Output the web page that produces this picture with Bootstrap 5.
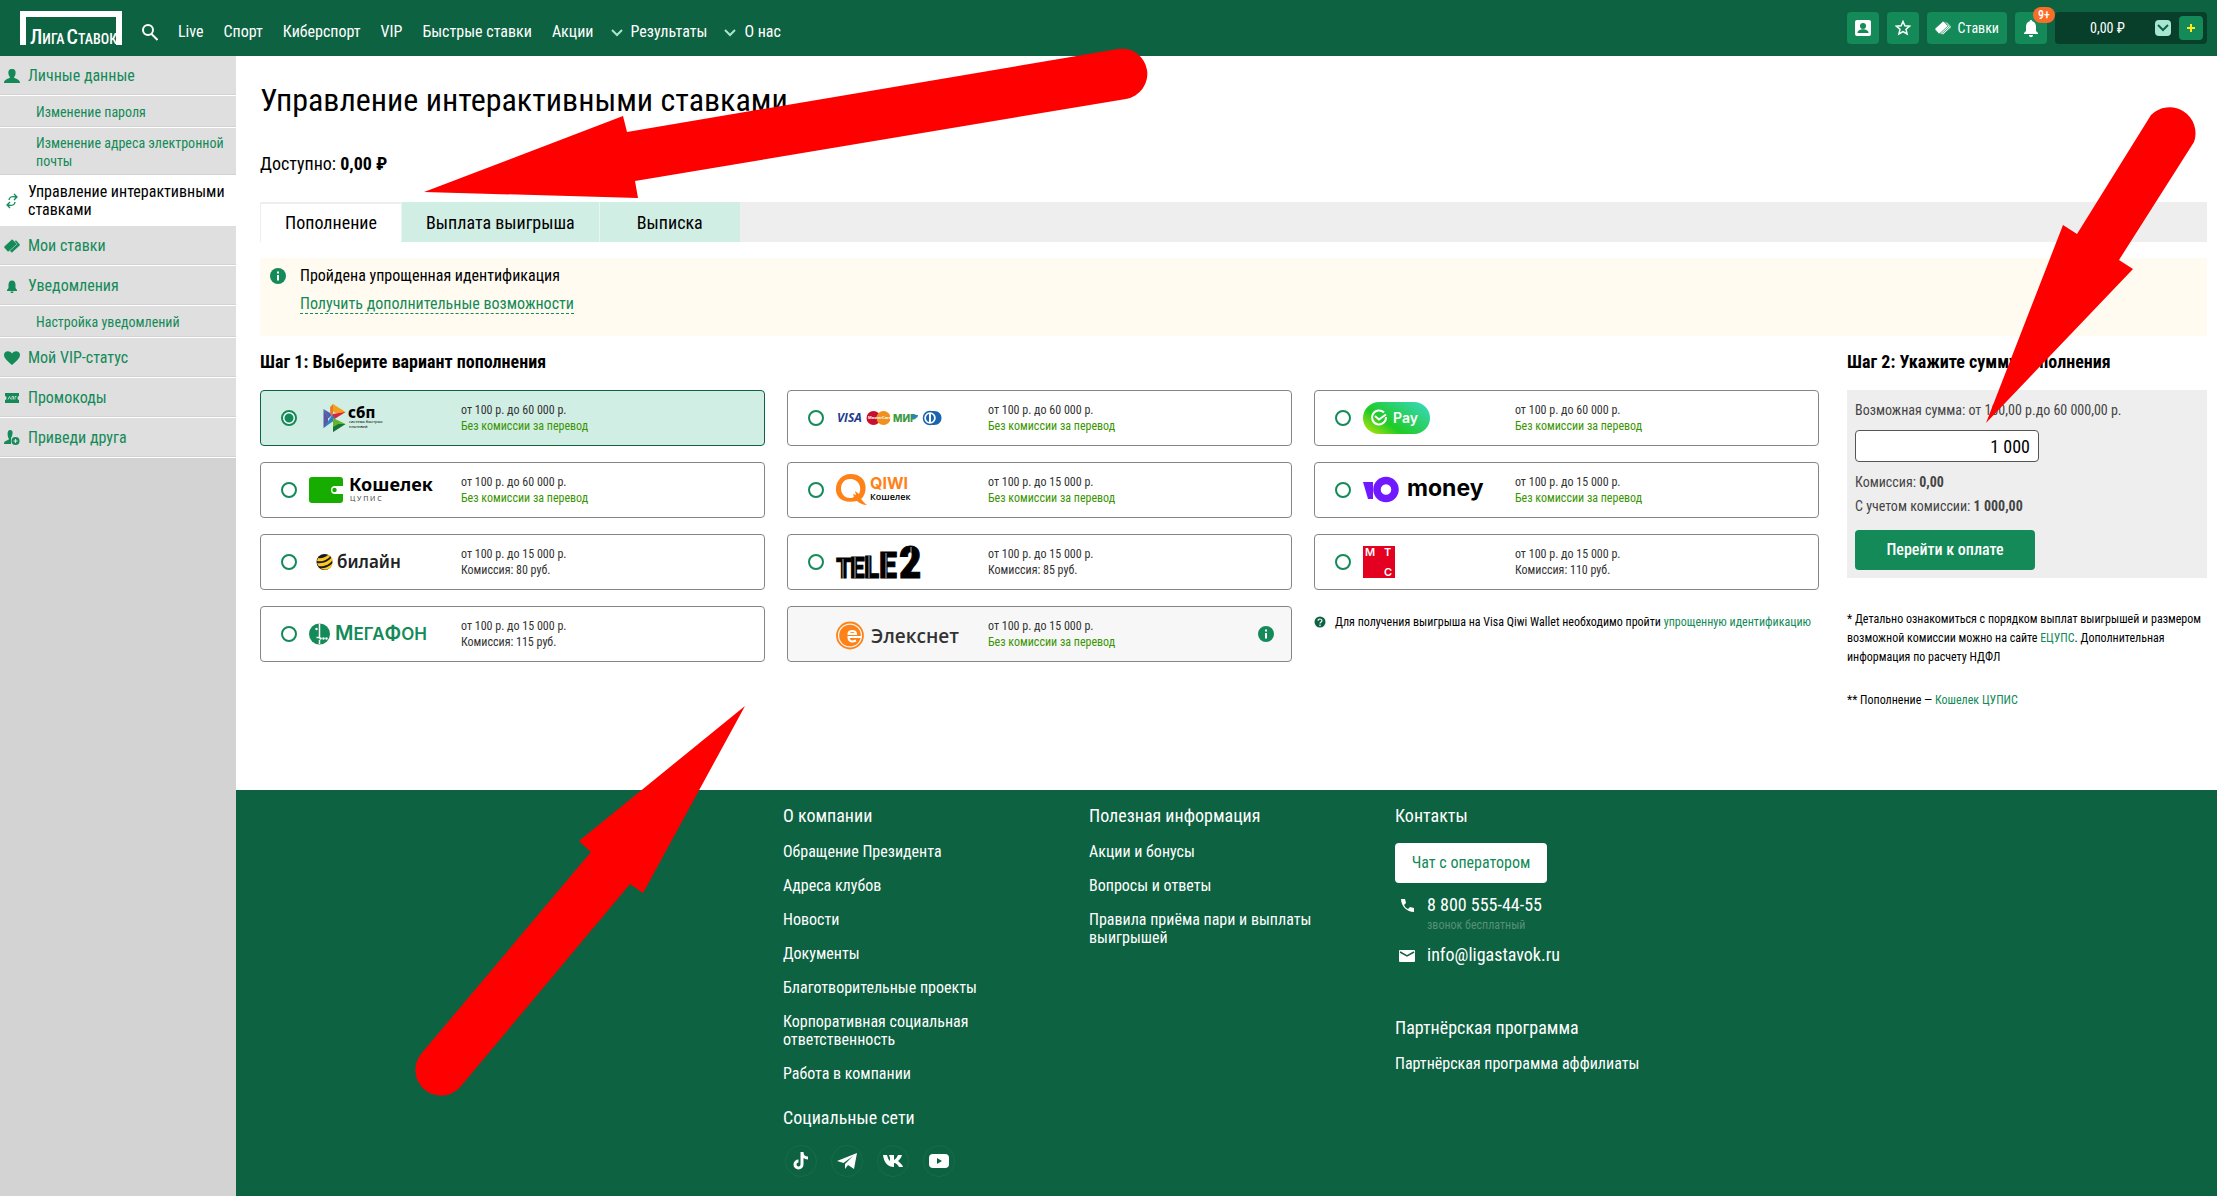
<!DOCTYPE html>
<html lang="ru">
<head>
<meta charset="utf-8">
<meta name="viewport" content="width=device-width, initial-scale=1">
<title>Управление интерактивными ставками</title>
<link href="https://cdn.jsdelivr.net/npm/bootstrap@5.3.0/dist/css/bootstrap.min.css" rel="stylesheet">
<style>
:root{--forest:#0d6241;--leaf:#138a58;--mint:#d1eee5}
body{font-family:"Roboto Condensed",Roboto,"Liberation Sans",sans-serif;font-size:16px;line-height:18px;color:#000;background:#fff;min-height:100vh}
a{color:var(--leaf);text-decoration:none}
.topbar{background:var(--forest);height:56px;padding:0 10px 0 20px}
.topbar .menu{gap:20px;margin-left:20px;padding-top:8px}
.topbar .menu a,.topbar .menu button{color:#fff;border:0;background:none;padding:0}
.topbar .menu button{margin-left:-3px}
.tools{gap:8px}
.tool{height:32px;min-width:32px;background:var(--leaf);border:0;border-radius:4px;color:#fff;padding:0 8px;font-size:14px;display:flex;align-items:center;justify-content:center;gap:6px;position:relative}
.tool.square{padding:0}
.count{position:absolute;left:18px;top:-5px;background:#f96d29;border-radius:8px;font-size:12px;line-height:16px;width:22px;font-weight:500}
.balance{width:152px;height:32px;background:#083f2a;border-radius:4px;color:#fff;font-size:14px;padding:0 4px 0 35px}
.balance button{border:0;padding:0;border-radius:4px;display:flex;align-items:center;justify-content:center}
.balance .open{width:16px;height:16px;background:#a6e6d2}
.balance .plus{width:24px;height:24px;background:var(--leaf)}
.side{width:236px;background:#d3d3d3}
.side a{display:flex;align-items:center;background:#dfdfdf;border-bottom:1px solid #fff;box-shadow:inset 0 -1px #d2d2d2;padding:11px 10px 10px 28px;position:relative;line-height:18px}
.side a.sub{font-size:14px;padding:7px 10px 6px 36px}
.side a.sub.two{padding:6px 10px 5px 36px}
.side a.active{background:#fff;color:#000;padding:7px 10px 6px 28px;box-shadow:none}
.side svg{position:absolute;left:4px;width:16px;height:16px}
.pane{padding:24px 10px 0 24px}
.pane h1{font-size:32px;line-height:40px;font-weight:400;margin:0 0 32px}
.avail{font-size:18px;line-height:24px;margin-bottom:26px}
.switch{background:#eee;height:40px}
.switch button{border:0;background:var(--mint);font-size:18px;padding:2px 24px 0;color:#000;min-width:141px}
.switch button+button{border-left:1px solid #e6f7f2}
.switch button.active{background:#fff;border:solid #eee;border-width:2px 0 0 1px;padding-top:0}
.notice{margin-top:16px;background:#fffbf0;padding:8px 10px 22px;gap:14px;line-height:20px}
.notice a{border-bottom:1px dashed var(--leaf);display:inline-block;margin-top:8px;line-height:19px}
.step{font-size:18px;line-height:24px;font-weight:700;margin:14px 0 16px}
.ways{--bs-gutter-x:22px;--bs-gutter-y:16px}
.way{height:56px;border:1px solid #858585;border-radius:4px;padding:0 17px 0 20px;font-size:12px;line-height:16px;color:#333;cursor:pointer}
.way.on{background:var(--mint);border-color:var(--forest)}
.way.off{background:#f7f7f7}
.way.off input{visibility:hidden}
.way input{appearance:none;width:16px;height:16px;margin:0 12px 0 0;border:2px solid var(--leaf);border-radius:50%;background:#fff;flex:none}
.way input:checked{background:radial-gradient(circle,var(--leaf) 4px,#fff 5px)}
.way .logo{width:145px;height:40px;margin-right:7px;flex:none;overflow:visible}
.free{color:#3a9500}
.hint{font-size:12px;gap:9px;padding-top:7px}
.pay{width:360px;margin-left:28px}
.box{background:#eee;padding:8px;font-size:14px;line-height:24px;color:#444}
.box input{display:block;width:184px;height:32px;border:1px solid #555;border-radius:4px;font-size:18px;text-align:right;padding:0 8px;margin:8px 0;color:#000;background:#fff}
.box button{display:block;width:180px;height:40px;border:0;border-radius:4px;background:var(--leaf);color:#fff;font-weight:500;font-size:16px;margin-top:12px}
.foot-note{font-size:12px;line-height:19px;margin:32px 0 0}
.foot-note+.foot-note{margin-top:24px}
footer{background:var(--forest);color:#fff;margin-top:80px;padding:17px 0 19px}
footer .inner{max-width:887px;margin:auto}
footer .wide{width:306px;padding-right:66px;flex:none}
footer h2{font-size:18px;line-height:18px;font-weight:400;margin:0 0 18px}
footer a{color:#fff}
footer li{margin-bottom:16px}
footer ul+h2{margin-top:26px}
.social{gap:14px;padding-left:2px}
.social a{width:32px;height:32px;border:1px solid #1a6b4a;border-radius:50%;display:flex;align-items:center;justify-content:center}
.chat{width:152px;height:40px;background:#fff;color:var(--leaf);border:0;border-radius:4px;font-size:16px}
.contact{gap:12px;font-size:18px;line-height:24px;padding-left:4px;margin-top:10px}
.contact small{display:block;font-size:12px;line-height:16px;color:#569178}
.partner{margin-top:52px}
.arrows{position:absolute;left:0;top:0;width:100%;pointer-events:none}
</style>
</head>
<body class="d-flex flex-column position-relative">
<header class="topbar d-flex align-items-center justify-content-between">
  <div class="d-flex align-items-center">
    <a href="#" aria-label="Лига Ставок"><svg class="d-block overflow-visible" width="102" height="34" viewBox="0 0 102 34"><path d="M0 34V0h102v34h-6V6H6v28z" fill="#fff"/><text x="10" y="33" fill="#fff" font-family="Roboto Condensed" font-weight="500" font-size="20">Л<tspan font-size="14">ИГА</tspan><tspan dx="2">С</tspan><tspan font-size="14">ТАВОК</tspan></text></svg></a>
    <nav class="menu d-flex align-items-center">
      <a href="#" aria-label="Поиск"><svg class="d-block" width="16" height="17" viewBox="0 0 16 17" fill="none" stroke="#fff" stroke-width="2"><circle cx="6" cy="6" r="5"/><path d="m9.500 10 6 6"/></svg></a>
      <a href="#">Live</a><a href="#">Спорт</a><a href="#">Киберспорт</a><a href="#">VIP</a><a href="#">Быстрые ставки</a><a href="#">Акции</a>
      <button type="button"><svg class="me-2" width="12" height="8" fill="none" stroke="#a6e6d2" stroke-width="2"><path d="m1 1 5 5 5-5"/></svg>Результаты</button>
      <button type="button"><svg class="me-2" width="12" height="8" fill="none" stroke="#a6e6d2" stroke-width="2"><path d="m1 1 5 5 5-5"/></svg>О нас</button>
    </nav>
  </div>
  <div class="tools d-flex">
    <button class="tool square" aria-label="Профиль"><svg width="16" height="16"><rect width="16" height="16" rx="2" fill="#fff"/><circle cx="8" cy="6" r="3" fill="#138a58"/><path d="M2.500 13c0-5 11-5 11 0z" fill="#138a58"/></svg></button>
    <button class="tool square" aria-label="Избранное"><svg width="16" height="16" fill="none" stroke="#fff" stroke-width="1.500"><path d="m8 1.500 1.900 4.300 4.700.4-3.600 3.100 1.100 4.600L8 11.500l-4.100 2.400L5 9.300 1.400 6.200l4.700-.4z"/></svg></button>
    <button class="tool"><svg width="17" height="16"><g fill="#fff" stroke="#138a58" stroke-width=".7" transform="rotate(-42 8 8)"><rect x="3" y="6" width="12" height="7" rx="1"/><rect x="2" y="4.500" width="12" height="7" rx="1"/><rect x="1" y="3" width="12" height="7" rx="1"/></g></svg>Ставки</button>
    <button class="tool square" aria-label="Уведомления"><svg width="16" height="19"><path d="M8 1c.9 0 1.200.6 1.200 1.300C12 3 13 5 13 8v4l2 2v1H1v-1l2-2V8c0-3 1-5 3.800-5.700C6.800 1.600 7.100 1 8 1zM6 16h4c0 3-4 3-4 0z" fill="#fff"/></svg><span class="count">9+</span></button>
    <div class="balance d-flex align-items-center"><span class="me-auto">0,00 ₽</span><button class="open me-2" aria-label="Открыть"><svg width="12" height="8" fill="none" stroke="#0d6241" stroke-width="2"><path d="m1 1 5 5 5-5"/></svg></button><button class="plus" aria-label="Пополнить"><svg width="8" height="10" stroke="#ffe81f" stroke-width="2"><path d="M4 1v8M0 5h8"/></svg></button></div>
  </div>
</header>

<div class="d-flex flex-grow-1">
  <nav class="side flex-shrink-0">
    <a href="#"><svg viewBox="0 0 16 16" fill="#138a58"><path d="M8 1c3 0 4 2 3.500 5-.2 1.500-1 2.500-1.500 3 0 2 6 1.500 6 6H0c0-4.500 6-4 6-6-.5-.5-1.300-1.500-1.500-3C4 3 5 1 8 1z"/></svg>Личные данные</a>
    <a href="#" class="sub">Изменение пароля</a>
    <a href="#" class="sub two">Изменение адреса электронной почты</a>
    <a href="#" class="active"><svg viewBox="0 0 16 16" fill="none" stroke="#138a58" stroke-width="1.300"><path d="M5 7c0-3 3-4 7-3M10 1l3 3-3 3M11 9c0 3-3 4-7 3M6 9l-3 3 3 3"/></svg>Управление интерактивными ставками</a>
    <a href="#"><svg viewBox="0 0 16 16"><g fill="#138a58" stroke="#dfdfdf" stroke-width=".6" transform="rotate(-42 8 8)"><rect x="3" y="6" width="12" height="7" rx="1"/><rect x="1" y="3" width="12" height="7" rx="1"/></g></svg>Мои ставки</a>
    <a href="#"><svg viewBox="0 0 16 16" fill="#138a58"><path d="M8 2.500c2.500 0 3.500 2 3.500 4.500v3l1.500 2v1H3v-1l1.500-2V7c0-2.500 1-4.500 3.500-4.500zM6.500 13.500h3c0 2-3 2-3 0z"/></svg>Уведомления</a>
    <a href="#" class="sub">Настройка уведомлений</a>
    <a href="#"><svg viewBox="0 0 16 16" fill="#138a58"><path d="M8 15C3 10.500 0 8 0 5c0-4 5.500-5 8-1.500C10.500 0 16 1 16 5c0 3-3 5.500-8 10z"/></svg>Мой VIP-статус</a>
    <a href="#"><svg viewBox="0 0 16 16"><path d="M1 3h14v3c-2 0-2 4 0 4v3H1v-3c2 0 2-4 0-4z" fill="#138a58"/><path d="M4 9.500 5.500 6.500 7 9.500M8 9.500v-3h1.500v3M11 9.500v-3h1.500" fill="none" stroke="#dfdfdf" stroke-width=".8"/></svg>Промокоды</a>
    <a href="#"><svg viewBox="0 0 16 16" fill="#138a58"><path d="M6 0c3 0 3 3 2 6-.3 1-.8 1.500-1 2v6H0c0-4 4-3 5-5C3 6 3 0 6 0z"/><circle cx="11.500" cy="11" r="4"/><path d="M11.500 9v4M9.500 11h4" stroke="#dfdfdf" stroke-width="1.200"/></svg>Приведи друга</a>
  </nav>

  <div class="flex-grow-1 d-flex flex-column">
    <main class="pane flex-grow-1">
      <h1>Управление интерактивными ставками</h1>
      <div class="avail">Доступно: <b>0,00 ₽</b></div>
      <div class="switch d-flex" role="tablist"><button role="tab" class="active">Пополнение</button><button role="tab">Выплата выигрыша</button><button role="tab">Выписка</button></div>
      <div class="notice d-flex">
        <svg width="16" height="20" class="flex-shrink-0"><circle cx="8" cy="10" r="8" fill="#138a58"/><path d="M8 5.500v2M8 9v5.500" stroke="#fff" stroke-width="2"/></svg>
        <div>Пройдена упрощенная идентификация<br><a href="#">Получить дополнительные возможности</a></div>
      </div>
      <div class="d-flex">
        <section class="flex-grow-1">
          <h2 class="step">Шаг 1: Выберите вариант пополнения</h2>
          <div class="row ways mt-0">
            <div class="col-4 mt-0"><label class="way on d-flex align-items-center"><input type="radio" name="way" checked>
              <svg class="logo" viewBox="0 0 145 40"><path d="M14.500 11 19 19v7l-4.500 4z" fill="#5b57a2"/><path d="m14.500 11 9 5.500-4 4z" fill="#4a60b0"/><path d="m24 6 .1 13.500-3-4V9z" fill="#e7792b"/><path d="m24 6 12.500 8-5.500 3.500-7-4z" fill="#f3a01f"/><path d="m36.500 14-12.500 8v-6z" fill="#d8234a"/><path d="m14.500 30 9-13.500 3 5z" fill="#317fc2"/><path d="M24 34V20l12.500 6z" fill="#65b32e"/><path d="m24 34 12.500-8h-7l-5.500 3z" fill="#15753b"/><text x="39" y="20" font-family="Noto Sans" font-weight="800" font-size="15">сбп</text><text x="40" y="25" font-family="Noto Sans" font-size="4">система быстрых</text><text x="40" y="30" font-family="Noto Sans" font-size="4">платежей</text></svg>
              <span>от 100 р. до 60 000 р.<br><span class="free">Без комиссии за перевод</span></span></label></div>
            <div class="col-4 mt-0"><label class="way d-flex align-items-center"><input type="radio" name="way">
              <svg class="logo" viewBox="0 0 145 40"><text x="1" y="24" font-family="Open Sans" font-weight="700" font-style="italic" font-size="12" fill="#1d3c8f">VISA</text><circle cx="37.500" cy="20" r="7" fill="#c8102e"/><circle cx="47.500" cy="20" r="7" fill="#f0901e"/><text x="32" y="21" font-family="Open Sans" font-weight="700" font-size="4" fill="#fff">MasterCard</text><text x="57" y="24" font-family="Inter" font-weight="800" font-size="10" fill="#3f9a46">МИР</text><path d="M75 17h7q0 3-3 3h-4z" fill="#2c7fc0"/><path d="M94 13h4c10 0 10 14 0 14h-4z" fill="#1a63ad"/><circle cx="94" cy="20" r="6.500" fill="#fff" stroke="#1a63ad" stroke-width="1.500"/><path d="M93 16c-4 1-4 7 0 8zM95 16c4 1 4 7 0 8z" fill="#1a63ad"/></svg>
              <span>от 100 р. до 60 000 р.<br><span class="free">Без комиссии за перевод</span></span></label></div>
            <div class="col-4 mt-0"><label class="way d-flex align-items-center"><input type="radio" name="way">
              <svg class="logo" viewBox="0 0 145 40"><defs><linearGradient id="sp" x1="0" y1="1" x2="1" y2=".3"><stop offset="0" stop-color="#c8e80a"/><stop offset=".4" stop-color="#1fcb25"/><stop offset="1" stop-color="#35d6a8"/></linearGradient></defs><rect y="4" width="67" height="32" rx="16" fill="url(#sp)"/><path d="M21 14.500A7 7 0 1 0 23 19M12 18l4 3.500 7-5" fill="none" stroke="#fff" stroke-width="2"/><text x="30" y="25" font-family="Inter" font-weight="600" font-size="14" fill="#fff">Pay</text></svg>
              <span>от 100 р. до 60 000 р.<br><span class="free">Без комиссии за перевод</span></span></label></div>
            <div class="col-4"><label class="way d-flex align-items-center"><input type="radio" name="way">
              <svg class="logo" viewBox="0 0 145 40"><rect y="7" width="34" height="26" rx="3" fill="#16ac00"/><path d="M34 16h-8a4 4 0 0 0 0 8h8z" fill="#fff"/><circle cx="25.500" cy="20" r="2.200" fill="#16ac00"/><text x="40" y="21" font-family="Noto Sans" font-weight="700" font-size="18">Кошелек</text><text x="41" y="31" font-family="Noto Sans" font-size="7" fill="#444">Ц У П И С</text></svg>
              <span>от 100 р. до 60 000 р.<br><span class="free">Без комиссии за перевод</span></span></label></div>
            <div class="col-4"><label class="way d-flex align-items-center"><input type="radio" name="way">
              <svg class="logo" viewBox="0 0 145 40"><path fill-rule="evenodd" d="M14.500 4C33 4 32 24 25 29c2 2 3 4 6 6-4 0-8-2-10-4C-8 37-4 4 14.500 4zM14 9C2 9 2 28 14 28c2 0 3-.5 4-1l-1-3 3 1-1-4 4 3c3-5 1-15-9-15z" fill="#ff8218"/><text x="34" y="19" font-family="Inter" font-weight="700" font-size="16" fill="#ff8218">QIWI</text><text x="34" y="30" font-family="Open Sans" font-weight="600" font-size="9">Кошелек</text></svg>
              <span>от 100 р. до 15 000 р.<br><span class="free">Без комиссии за перевод</span></span></label></div>
            <div class="col-4"><label class="way d-flex align-items-center"><input type="radio" name="way">
              <svg class="logo" viewBox="0 0 145 40"><path d="M0 12h10v17H5z" fill="#7018ff"/><circle cx="23" cy="19.500" r="9" fill="none" stroke="#7018ff" stroke-width="7.500"/><text x="44" y="26" font-family="Inter" font-weight="700" font-size="23">money</text></svg>
              <span>от 100 р. до 15 000 р.<br><span class="free">Без комиссии за перевод</span></span></label></div>
            <div class="col-4"><label class="way d-flex align-items-center"><input type="radio" name="way">
              <svg class="logo" viewBox="0 0 145 40"><circle cx="15.500" cy="20" r="8" fill="#1a1a1a"/><path d="M9 16c3 1 8-1 10-3l2 1c-2 4-8 6-13 5zM8 21c6 1 12-2 15-6l.5 3c-3 5-9 7-14 6zM11 26c5 1 10-2 12.500-5 0 5-6 9-12.500 5z" fill="#ffc823"/><text x="28" y="26" font-family="Noto Sans" font-weight="600" font-size="17" fill="#222">билайн</text></svg>
              <span>от 100 р. до 15 000 р.<br>Комиссия: 80 руб.</span></label></div>
            <div class="col-4"><label class="way d-flex align-items-center"><input type="radio" name="way">
              <svg class="logo" viewBox="0 0 145 40"><g font-family="Roboto Condensed" font-weight="900" stroke="#000"><text x="0" y="36" font-size="28">T</text><text x="14" y="36" font-size="30">E</text><text x="28" y="36" font-size="32">L</text><text x="43" y="36" font-size="37">E</text><text x="63" y="36" font-size="44">2</text></g><path d="M7 17v20M19 15v21M33 14v22M50 11v25M75 5v8" stroke="#fff" stroke-width=".7"/></svg>
              <span>от 100 р. до 15 000 р.<br>Комиссия: 85 руб.</span></label></div>
            <div class="col-4"><label class="way d-flex align-items-center"><input type="radio" name="way">
              <svg class="logo" viewBox="0 0 145 40"><rect y="4" width="32" height="32" fill="#e30020"/><g fill="#fff" font-family="Inter" font-weight="600" font-size="11"><text x="2" y="14">М</text><text x="21" y="14">Т</text><text x="21" y="34">С</text></g></svg>
              <span>от 100 р. до 15 000 р.<br>Комиссия: 110 руб.</span></label></div>
            <div class="col-4"><label class="way d-flex align-items-center"><input type="radio" name="way">
              <svg class="logo" viewBox="0 0 145 40"><circle cx="10.500" cy="20" r="10.500" fill="#138a58"/><path d="M10.500 9.500v14h-3M10.500 30v-4" fill="none" stroke="#fff" stroke-width="1.500"/><circle cx="7.500" cy="15" r="1.200" fill="#fff"/><g fill="#fff"><circle cx="11.500" cy="24.500" r="1.200"/><circle cx="14.500" cy="24.500" r="1.200"/><circle cx="17.500" cy="24.500" r="1.200"/></g><text x="26" y="26" font-family="Inter" font-weight="600" font-size="20" fill="#138a58">М<tspan font-size="17">ЕГА</tspan>Ф<tspan font-size="17">ОН</tspan></text></svg>
              <span>от 100 р. до 15 000 р.<br>Комиссия: 115 руб.</span></label></div>
            <div class="col-4"><label class="way off d-flex align-items-center"><input type="radio" name="way" disabled>
              <svg class="logo" viewBox="0 0 145 40"><circle cx="14" cy="21.500" r="13" fill="none" stroke="#ff8218" stroke-width="1.800"/><circle cx="14" cy="21.500" r="10.800" fill="#ff8218"/><path d="M25 23H12.500c0 5 4 5 7.500 3.500M12.500 20c0-4 7.500-4 7.500 0z" fill="none" stroke="#fff" stroke-width="2"/><text x="35" y="29" font-family="Open Sans" font-weight="600" font-size="19" fill="#333">Элекснет</text></svg>
              <span class="me-auto">от 100 р. до 15 000 р.<br><span class="free">Без комиссии за перевод</span></span>
              <svg width="16" height="16"><circle cx="8" cy="8" r="8" fill="#138a58"/><path d="M8 3.500v2M8 7v5.500" stroke="#fff" stroke-width="2"/></svg></label></div>
            <div class="col-4"><div class="hint d-flex align-items-center"><svg width="12" height="12" class="flex-shrink-0"><circle cx="6" cy="6" r="5.500" fill="#0d6241"/><path d="M4 4.800c0-2.500 4-2.300 4 0C8 6 6 6 6 7.500M6 8.500V10" fill="none" stroke="#fff" stroke-width="1.200"/></svg><span>Для получения выигрыша на Visa Qiwi Wallet необходимо пройти <a href="#">упрощенную идентификацию</a></span></div></div>
          </div>
        </section>
        <aside class="pay flex-shrink-0">
          <h2 class="step">Шаг 2: Укажите сумму пополнения</h2>
          <form class="box">
            <label for="sum">Возможная сумма: от 100,00 р.до 60 000,00 р.</label>
            <input id="sum" type="text" value="1 000">
            <div>Комиссия: <b>0,00</b></div>
            <div>С учетом комиссии: <b>1 000,00</b></div>
            <button type="button">Перейти к оплате</button>
          </form>
          <p class="foot-note">* Детально ознакомиться с порядком выплат выигрышей и размером возможной комиссии можно на сайте <a href="#">ЕЦУПС</a>. Дополнительная информация по расчету НДФЛ</p>
          <p class="foot-note">** Пополнение — <a href="#">Кошелек ЦУПИС</a></p>
        </aside>
      </div>
    </main>
    <footer>
      <div class="inner d-flex">
        <div class="wide">
          <h2>О компании</h2>
          <ul class="list-unstyled m-0"><li><a href="#">Обращение Президента</a></li><li><a href="#">Адреса клубов</a></li><li><a href="#">Новости</a></li><li><a href="#">Документы</a></li><li><a href="#">Благотворительные проекты</a></li><li><a href="#">Корпоративная социальная ответственность</a></li><li><a href="#">Работа в компании</a></li></ul>
          <h2>Социальные сети</h2>
          <div class="social d-flex">
            <a href="#" aria-label="TikTok"><svg width="18" height="18" fill="none" stroke="#fff" stroke-width="3"><path d="M10 0v12.500a3.500 3.500 0 1 1-3.500-3.500M10 0c0 4 3 6 6 6"/></svg></a>
            <a href="#" aria-label="Telegram"><svg width="20" height="18" fill="#fff"><path d="m0 9 20-8-3 16-6-4-3 4v-5l8-8-9.500 7z"/></svg></a>
            <a href="#" aria-label="VK"><svg width="20" height="14" fill="#fff"><path d="M0 1h4c1 4 2 5 3 6V4L6 1h5v5c2-1 3-3 4-5h4c-1 3-2 4-4 6 2 2 4 3 5 6h-4c-1-2-3-4-5-4v4C5 13 1 9 0 1z"/></svg></a>
            <a href="#" aria-label="YouTube"><svg width="20" height="14"><rect width="20" height="14" rx="4" fill="#fff"/><path d="m8 4 5 3-5 3z" fill="#0d6241"/></svg></a>
          </div>
        </div>
        <div class="wide">
          <h2>Полезная информация</h2>
          <ul class="list-unstyled m-0"><li><a href="#">Акции и бонусы</a></li><li><a href="#">Вопросы и ответы</a></li><li><a href="#">Правила приёма пари и выплаты выигрышей</a></li></ul>
        </div>
        <div>
          <h2>Контакты</h2>
          <button type="button" class="chat">Чат с оператором</button>
          <div class="contact d-flex"><svg width="16" height="24"><path d="M2 6h4l1 4-2 2c1 2 2 3 4 4l2-2 4 1v4C8 19 2 13 2 6z" fill="#fff"/></svg><div><a href="#">8 800 555-44-55</a><small>звонок бесплатный</small></div></div>
          <div class="contact d-flex"><svg width="16" height="24"><rect y="7" width="16" height="12" rx="1" fill="#fff"/><path d="m1 9 7 4 7-4" fill="none" stroke="#0d6241" stroke-width="1.500"/></svg><a href="#">info@ligastavok.ru</a></div>
          <h2 class="partner">Партнёрская программа</h2>
          <ul class="list-unstyled m-0"><li><a href="#">Партнёрская программа аффилиаты</a></li></ul>
        </div>
      </div>
    </footer>
  </div>
</div>
<svg class="arrows" viewBox="0 0 2217 1196" fill="#f00" aria-hidden="true">
  <path d="M424 192 623 116l4 16 491-83a25 25 0 0 1 8 50l-491 82 3 17z"/>
  <path d="M1986 423 2063 225l14 9 74-119a26 26 0 0 1 43 27l-75 118 14 9z"/>
  <path d="m745 706-166 135 12 11-170 202a25 25 0 0 0 40 32l169-202 13 9z"/>
</svg>
<script src="https://cdn.jsdelivr.net/npm/bootstrap@5.3.0/dist/js/bootstrap.bundle.min.js"></script>
</body>
</html>
